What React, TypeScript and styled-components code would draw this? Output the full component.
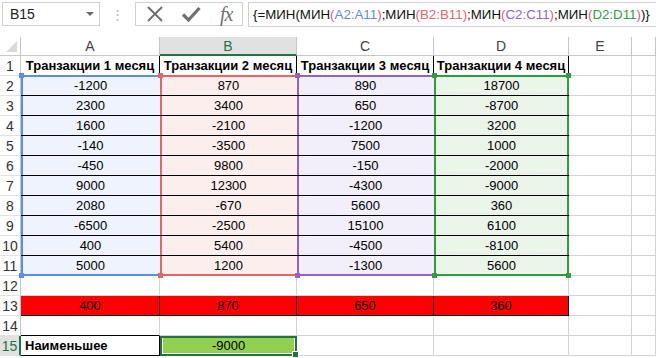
import React from "react";
import styled, { createGlobalStyle } from "styled-components";

const GlobalStyle = createGlobalStyle`
  html, body {
    margin: 0;
    padding: 0;
    background: #ffffff;
    overflow: hidden;
  }
  body {
    font-family: "Liberation Sans", Arial, sans-serif;
  }
`;

const GRID = "#d4d4d4";
const HEAD_LINE = "#c6c6c6";
const SELECT = "#217346";

type Range = { color: string; fill: string; values: number[]; title: string };

const ranges: Range[] = [
  {
    title: "Транзакции 1 месяц",
    color: "#5b8ee8",
    fill: "#eef3fd",
    values: [-1200, 2300, 1600, -140, -450, 9000, 2080, -6500, 400, 5000],
  },
  {
    title: "Транзакции 2 месяц",
    color: "#e56666",
    fill: "#fdeeee",
    values: [870, 3400, -2100, -3500, 9800, 12300, -670, -2500, 5400, 1200],
  },
  {
    title: "Транзакции 3 месяц",
    color: "#8f63c9",
    fill: "#f2eefa",
    values: [890, 650, -1200, 7500, -150, -4300, 5600, 15100, -4500, -1300],
  },
  {
    title: "Транзакции 4 месяц",
    color: "#2f9e41",
    fill: "#ebf4e9",
    values: [18700, -8700, 3200, 1000, -2000, -9000, 360, 6100, -8100, 5600],
  },
];

const minimums = [400, 870, 650, 360];

const Page = styled.div`
  width: 656px;
  height: 358px;
  overflow: hidden;
`;

/* ---------- formula bar ---------- */

const FormulaBar = styled.div`
  display: flex;
  align-items: flex-start;
  height: 28px;
  padding: 2px 0 0 2px;
  margin-bottom: 9px;
  box-sizing: border-box;
`;

const NameBox = styled.div`
  width: 98px;
  height: 24px;
  box-sizing: border-box;
  border: 1px solid #d0d0d0;
  display: flex;
  align-items: center;
  justify-content: space-between;
  padding: 0 5px 0 7px;
  font-size: 14px;
  color: #222;
`;

const Caret = styled.span`
  width: 0;
  height: 0;
  border-left: 4px solid transparent;
  border-right: 4px solid transparent;
  border-top: 4px solid #6b6b6b;
`;

const Grip = styled.div`
  width: 35px;
  height: 24px;
  display: flex;
  justify-content: center;
  align-items: center;
  color: #b8b8b8;
  font-size: 13px;
`;

const ButtonGroup = styled.div`
  width: 108px;
  height: 24px;
  box-sizing: border-box;
  border: 1px solid #d0d0d0;
  display: flex;
  align-items: center;
  padding-left: 10px;
  gap: 17px;
`;

const FxLabel = styled.span`
  font-family: "Liberation Serif", "Times New Roman", serif;
  font-style: italic;
  font-size: 20px;
  color: #707070;
  letter-spacing: -1px;
  margin-left: 2px;
`;

const FormulaBox = styled.div`
  flex: 1;
  margin-left: 5px;
  height: 25px;
  box-sizing: border-box;
  border: 1px solid #d0d0d0;
  border-right: none;
  display: flex;
  align-items: center;
  padding-left: 4px;
  font-size: 13.3px;
  color: #111;
  white-space: nowrap;
  overflow: hidden;
`;

const Ref = styled.span<{ $color: string }>`
  color: ${({ $color }) => $color};
`;

/* ---------- sheet ---------- */

const Sheet = styled.div`
  display: grid;
  grid-template-columns: 21px 139px 137px 137px 135px 63px 24px;
  grid-template-rows: 19px repeat(15, 20px);
  font-size: 13px;
  color: #000;
`;

const Corner = styled.div`
  border-right: 1px solid ${HEAD_LINE};
  border-bottom: 1px solid ${HEAD_LINE};
  display: flex;
  align-items: flex-end;
  justify-content: flex-end;
  padding: 0 3px 3px 0;
`;

const ColHeader = styled.div<{ $selected?: boolean }>`
  display: flex;
  align-items: center;
  justify-content: center;
  font-size: 14px;
  color: ${({ $selected }) => ($selected ? SELECT : "#444")};
  background: ${({ $selected }) => ($selected ? "#e1e1e1" : "#ffffff")};
  border-right: 1px solid ${HEAD_LINE};
  border-bottom: ${({ $selected }) =>
    $selected ? `2px solid ${SELECT}` : `1px solid ${HEAD_LINE}`};
  box-sizing: border-box;
`;

const RowHeader = styled.div<{ $selected?: boolean }>`
  display: flex;
  align-items: center;
  justify-content: center;
  font-size: 14px;
  color: ${({ $selected }) => ($selected ? SELECT : "#333")};
  background: ${({ $selected }) => ($selected ? "#e1e1e1" : "#ffffff")};
  border-right: ${({ $selected }) =>
    $selected ? `2px solid ${SELECT}` : `1px solid ${HEAD_LINE}`};
  border-bottom: 1px solid #e2e2e2;
  box-sizing: border-box;
`;

const TitleCell = styled.div<{ $under: string }>`
  display: flex;
  align-items: center;
  justify-content: center;
  font-weight: bold;
  white-space: nowrap;
  border-right: 1px solid #000;
  border-bottom: 1px solid ${({ $under }) => $under};
  box-sizing: border-box;
  overflow: hidden;
`;

const DataCell = styled.div<{
  $color: string;
  $fill: string;
  $first: boolean;
  $last: boolean;
  $edge: boolean;
}>`
  position: relative;
  display: flex;
  align-items: center;
  justify-content: center;
  background: ${({ $fill }) => $fill};
  border-bottom: 1px solid ${({ $last, $color }) => ($last ? $color : "#000")};
  box-sizing: border-box;
  box-shadow: ${({ $color, $first, $last, $edge }) =>
    [
      `inset 2px 0 0 ${$color}`,
      $first ? `inset 0 1px 0 ${$color}` : "",
      $last ? `inset 0 -1px 0 ${$color}` : "",
      $edge ? `inset -2px 0 0 ${$color}` : "",
    ]
      .filter(Boolean)
      .join(", ")};
`;

const Handle = styled.span<{
  $color: string;
  $v: "top" | "bottom";
  $h: "left" | "right";
}>`
  position: absolute;
  z-index: 2;
  width: 5px;
  height: 5px;
  background: ${({ $color }) => $color};
  ${({ $v }) => ($v === "top" ? "top: -3px;" : "bottom: -3px;")}
  ${({ $h }) => ($h === "left" ? "left: -2px;" : "right: -2px;")}
`;

const EmptyCell = styled.div<{ $under?: string; $side?: string }>`
  border-right: 1px solid ${({ $side }) => $side || GRID};
  border-bottom: 1px solid ${({ $under }) => $under || GRID};
  box-sizing: border-box;
`;

const MinCell = styled.div`
  display: flex;
  align-items: center;
  justify-content: center;
  background: #ff0000;
  border-right: 1px solid #000;
  border-bottom: 1px solid #000;
  box-sizing: border-box;
`;

const LabelCell = styled.div`
  display: flex;
  align-items: center;
  padding-left: 4px;
  font-weight: bold;
  border-right: 1px solid #000;
  border-bottom: 1px solid #000;
  box-sizing: border-box;
`;

const ResultCell = styled.div`
  position: relative;
  display: flex;
  align-items: center;
  justify-content: center;
  background: #92d050;
  box-sizing: border-box;
  border: 2px solid ${SELECT};
  border-top: 1px solid ${SELECT};
  box-shadow: inset 0 1px 0 ${SELECT}, inset 0 0 0 1px #ffffff;
`;

const FillHandle = styled.span`
  position: absolute;
  z-index: 2;
  right: -4px;
  bottom: -4px;
  width: 5px;
  height: 5px;
  background: ${SELECT};
  border: 1px solid #ffffff;
`;

const XIcon = () => (
  <svg width="18" height="18" viewBox="0 0 18 18">
    <path d="M2 2 L16 16 M16 2 L2 16" stroke="#707070" strokeWidth="2" fill="none" />
  </svg>
);

const CheckIcon = () => (
  <svg width="20" height="18" viewBox="0 0 20 18">
    <path d="M2 9.5 L7.5 15 L18.5 3" stroke="#707070" strokeWidth="3.2" fill="none" />
  </svg>
);

const CornerMark = () => (
  <svg width="11" height="11" viewBox="0 0 11 11">
    <path d="M11 0 L11 11 L0 11 Z" fill="#dadada" />
  </svg>
);

const PAREN = "#e0607a";

const App = () => {
  const letters = ["A", "B", "C", "D", "E", ""];
  const rows: React.ReactNode[] = [];

  // row 1: titles
  rows.push(<RowHeader key="h1">1</RowHeader>);
  ranges.forEach((r, i) =>
    rows.push(
      <TitleCell key={`t${i}`} $under={r.color}>
        {r.title}
      </TitleCell>
    )
  );
  rows.push(<EmptyCell key="t4" />, <EmptyCell key="t5" />);

  // rows 2..11: data
  for (let k = 0; k < 10; k++) {
    const first = k === 0;
    const last = k === 9;
    rows.push(<RowHeader key={`h${k + 2}`}>{k + 2}</RowHeader>);
    ranges.forEach((r, i) => {
      const edge = i === ranges.length - 1;
      rows.push(
        <DataCell
          key={`d${k}-${i}`}
          $color={r.color}
          $fill={r.fill}
          $first={first}
          $last={last}
          $edge={edge}
        >
          {r.values[k]}
          {(first || last) && (
            <Handle $color={r.color} $v={first ? "top" : "bottom"} $h="left" />
          )}
          {(first || last) && edge && (
            <Handle $color={r.color} $v={first ? "top" : "bottom"} $h="right" />
          )}
        </DataCell>
      );
    });
    rows.push(<EmptyCell key={`e${k}`} />, <EmptyCell key={`x${k}`} />);
  }

  // row 12
  rows.push(<RowHeader key="h12">12</RowHeader>);
  for (let i = 0; i < 6; i++) rows.push(<EmptyCell key={`r12-${i}`} />);

  // row 13: minimums
  rows.push(<RowHeader key="h13">13</RowHeader>);
  minimums.forEach((v, i) => rows.push(<MinCell key={`m${i}`}>{v}</MinCell>));
  rows.push(<EmptyCell key="m4" />, <EmptyCell key="m5" />);

  // row 14
  rows.push(<RowHeader key="h14">14</RowHeader>);
  rows.push(<EmptyCell key="r14-0" $under="#000" />);
  for (let i = 1; i < 6; i++) rows.push(<EmptyCell key={`r14-${i}`} />);

  // row 15
  rows.push(
    <RowHeader key="h15" $selected>
      15
    </RowHeader>
  );
  rows.push(<LabelCell key="l15">Наименьшее</LabelCell>);
  rows.push(
    <ResultCell key="res">
      -9000
      <FillHandle />
    </ResultCell>
  );
  for (let i = 2; i < 6; i++) rows.push(<EmptyCell key={`r15-${i}`} />);

  return (
    <Page>
      <GlobalStyle />
      <FormulaBar>
        <NameBox>
          B15
          <Caret />
        </NameBox>
        <Grip>⋮</Grip>
        <ButtonGroup>
          <XIcon />
          <CheckIcon />
          <FxLabel>fx</FxLabel>
        </ButtonGroup>
        <FormulaBox>
          {"{=МИН(МИН"}
          <Ref $color={PAREN}>(</Ref>
          <Ref $color={ranges[0].color}>A2:A11</Ref>
          <Ref $color={PAREN}>)</Ref>
          {";МИН"}
          <Ref $color={PAREN}>(</Ref>
          <Ref $color={ranges[1].color}>B2:B11</Ref>
          <Ref $color={PAREN}>)</Ref>
          {";МИН"}
          <Ref $color={PAREN}>(</Ref>
          <Ref $color={ranges[2].color}>C2:C11</Ref>
          <Ref $color={PAREN}>)</Ref>
          {";МИН"}
          <Ref $color={PAREN}>(</Ref>
          <Ref $color={ranges[3].color}>D2:D11</Ref>
          <Ref $color={PAREN}>)</Ref>
          {")}"}
        </FormulaBox>
      </FormulaBar>
      <Sheet>
        <Corner>
          <CornerMark />
        </Corner>
        {letters.map((l) => (
          <ColHeader key={`c${l}`} $selected={l === "B"}>
            {l}
          </ColHeader>
        ))}
        {rows}
      </Sheet>
    </Page>
  );
};

export default App;
